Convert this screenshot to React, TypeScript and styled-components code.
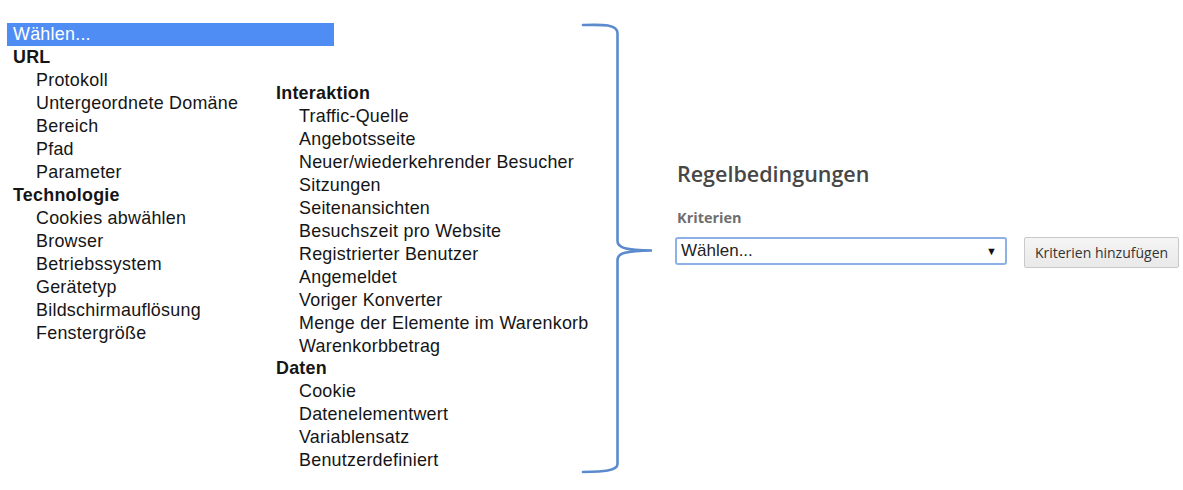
import React from 'react';
import styled, { createGlobalStyle } from 'styled-components';

const GlobalStyle = createGlobalStyle`
  html, body {
    margin: 0;
    padding: 0;
    background: #ffffff;
  }
  body {
    font-family: "Liberation Sans", Arial, sans-serif;
  }
`

const Page = styled.div`
  display: flex;
  align-items: flex-start;
  width: 1183px;
  height: 490px;
  overflow: hidden;
`

const Menu = styled.div`
  flex: none;
  width: 574px;
  margin: 23px 0 0 7px;
  font-family: "Liberation Sans", Arial, sans-serif;
  font-size: 17.9px;
  letter-spacing: 0.25px;
  color: #151515;
`

const Selected = styled.div`
  width: 327px;
  height: 23px;
  line-height: 23px;
  padding-left: 6px;
  box-sizing: border-box;
  background: #4f8df5;
  color: #ffffff;
`

const Columns = styled.div`
  display: flex;
  align-items: flex-start;
`

const Column = styled.div<{ $width?: number; $top?: number }>`
  flex: none;
  width: ${p => (p.$width ? `${p.$width}px` : 'auto')};
  margin-top: ${p => p.$top || 0}px;
  white-space: nowrap;
`

const Group = styled.div`
  line-height: 23px;
  padding-left: 6px;
  font-weight: bold;
`

const Item = styled.div`
  line-height: 22.95px;
  padding-left: 29px;
`

const Brace = styled.svg`
  flex: none;
  margin-top: 20px;
`

const Panel = styled.div`
  margin: 160px 0 0 21px;
  font-family: "Open Sans", sans-serif;
`

const Title = styled.h2`
  margin: 0;
  font-size: 21.5px;
  line-height: 28px;
  font-weight: 600;
  color: #474747;
`

const Label = styled.div`
  margin-top: 21px;
  font-size: 14.5px;
  line-height: 18px;
  font-weight: 700;
  color: #6e6e6e;
`

const Row = styled.div`
  display: flex;
  align-items: flex-start;
  margin-top: 10px;
`

const SelectBox = styled.div`
  display: flex;
  align-items: center;
  justify-content: space-between;
  width: 332px;
  height: 28px;
  box-sizing: border-box;
  margin-left: -2px;
  padding: 0 8px 0 4px;
  border: 2px solid #8db0e6;
  border-radius: 3px;
  background: #fff;
  font-family: "Liberation Sans", Arial, sans-serif;
  font-size: 17px;
  color: #222;
`

const Arrow = styled.span`
  font-size: 11px;
  color: #111;
`

const Button = styled.button`
  margin-left: 17px;
  width: 155px;
  height: 31px;
  border: 1px solid #c9c9c9;
  border-radius: 2px;
  background: linear-gradient(#f5f5f5, #e9e9e9);
  font-family: "Open Sans", sans-serif;
  font-size: 14px;
  color: #333;
  padding: 0;
`

const left = [
  { title: 'URL', items: ['Protokoll', 'Untergeordnete Domäne', 'Bereich', 'Pfad', 'Parameter'] },
  {
    title: 'Technologie',
    items: ['Cookies abwählen', 'Browser', 'Betriebssystem', 'Gerätetyp', 'Bildschirmauflösung', 'Fenstergröße'],
  },
]

const right = [
  {
    title: 'Interaktion',
    items: [
      'Traffic-Quelle',
      'Angebotsseite',
      'Neuer/wiederkehrender Besucher',
      'Sitzungen',
      'Seitenansichten',
      'Besuchszeit pro Website',
      'Registrierter Benutzer',
      'Angemeldet',
      'Voriger Konverter',
      'Menge der Elemente im Warenkorb',
      'Warenkorbbetrag',
    ],
  },
  { title: 'Daten', items: ['Cookie', 'Datenelementwert', 'Variablensatz', 'Benutzerdefiniert'] },
]

function Groups({ groups }) {
  return (
    <>
      {groups.map(g => (
        <React.Fragment key={g.title}>
          <Group>{g.title}</Group>
          {g.items.map(i => (
            <Item key={i}>{i}</Item>
          ))}
        </React.Fragment>
      ))}
    </>
  )
}

function App() {
  return (
    <Page>
      <GlobalStyle />
      <Menu>
        <Selected>Wählen...</Selected>
        <Columns>
          <Column $width={263}>
            <Groups groups={left} />
          </Column>
          <Column $top={36}>
            <Groups groups={right} />
          </Column>
        </Columns>
      </Menu>
      <Brace width="75" height="460" viewBox="581 20 75 460">
        <path
          d="M583 25 C603 24.5 617 24 617.5 33 L617.5 241 C617.5 248 626 250 652 250.5 C626 251 617.5 253 617.5 260 L617.5 464 C617.5 471 603 471.5 583 472"
          fill="none"
          stroke="#5b8bcd"
          strokeWidth="2.6"
          strokeLinecap="round"
        />
      </Brace>
      <Panel>
        <Title>Regelbedingungen</Title>
        <Label>Kriterien</Label>
        <Row>
          <SelectBox>
            <span>Wählen...</span>
            <Arrow>▼</Arrow>
          </SelectBox>
          <Button>Kriterien hinzufügen</Button>
        </Row>
      </Panel>
    </Page>
  )
}

export default App;
